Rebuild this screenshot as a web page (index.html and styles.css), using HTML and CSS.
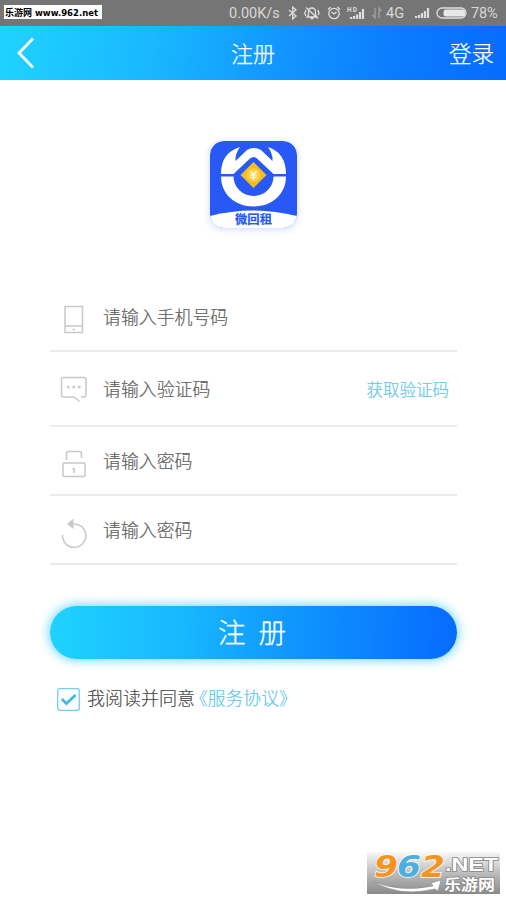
FILE: index.html
```html
<!DOCTYPE html>
<html lang="zh-CN">
<head>
<meta charset="UTF-8">
<title>注册</title>
<link rel="stylesheet" href="styles.css">
</head>
<body>
<div class="status">
  <div class="site-tag"><svg width="98" height="14" viewBox="0 0 98 14"><text class="tag-cn" x="1" y="10.8" textLength="27" lengthAdjust="spacingAndGlyphs">乐游网</text><text class="tag-url" x="31" y="10.8" textLength="63" lengthAdjust="spacingAndGlyphs">www.962.net</text></svg></div>
  <div class="status-right">
    <span class="speed">0.00K/s</span>
    <svg class="bt" width="10" height="14" viewBox="0 0 10 14"><path d="M1 4l7 6-3.300 3V1L8 4l-7 6"/></svg>
    <svg class="bell" width="16" height="14" viewBox="0 0 16 14"><path d="M3 11h10l-1.500-2V5.500C11.500 3.500 10 2 8 2S4.500 3.500 4.500 5.500V9zM6.500 12.500h3M2 1.500l12 11M2 4L.8 7l1 3M14 4l1 3-.8 2"/></svg>
    <svg class="alarm" width="14" height="14" viewBox="0 0 14 14"><circle cx="7" cy="7.500" r="5.200"/><path d="M4.500 6l2.500 2 2.500-2M1 3.500L3.500 1M13 3.500L10.500 1"/></svg>
    <svg class="hd" width="19" height="14" viewBox="0 0 19 14"><text x="0" y="6" textLength="10">HD</text><path d="M4 13v-2M7 13v-3M10 13V8.500M13 13V6M16 13V3"/></svg>
    <svg class="arrows" width="10" height="12" viewBox="0 0 10 12"><path d="M3 1v10L.5 8M7 11V1l2.500 3"/></svg>
    <span class="net">4G</span>
    <svg class="bars" width="17" height="12" viewBox="0 0 17 12"><path d="M2 11V9M5 11V8M8 11V6M11 11V4M14 11V1"/></svg>
    <svg class="battery" width="31" height="12" viewBox="0 0 31 12"><rect class="shell" x="1" y="1" width="29" height="10" rx="5"/><rect class="charge" x="7.500" y="2.500" width="21.500" height="7" rx="2.500"/></svg>
    <span class="pct">78%</span>
  </div>
</div>
<header class="nav">
  <svg class="back" width="20" height="32" viewBox="0 0 20 32"><path d="M17 1.500L3 16l14 14.500"/></svg>
  <h1>注册</h1>
  <a class="login">登录</a>
</header>
<main>
  <svg class="logo" width="87" height="87" viewBox="0 0 87 87">
    <defs><clipPath id="tile"><rect width="87" height="87" rx="14"/></clipPath></defs>
    <g clip-path="url(#tile)">
      <rect width="87" height="87" fill="#2859f7"/>
      <path d="M0 75Q43 64 87 75V87H0z" fill="#fff"/>
      <path d="M11 33C11 19 17 10 30 6Q25 13 25.500 20L37 9Q44 5 51 9L62.500 20Q63 13 58 6C70 10 76 19 76 33H63.500L47 17.500Q43.500 14.500 40 17.500L23.500 33z" fill="#fff"/>
      <path d="M11 35.500H23.500A20 19.500 0 0 0 63.500 35.500H76C76 53 62 65.500 43.500 65.500S11 53 11 35.500z" fill="#fff"/>
      <path d="M43.500 21L56.500 34 43.500 47 30.500 34z" fill="#f5bd20"/>
      <circle cx="43.500" cy="34" r="6.800" fill="#ffcf45"/>
      <path d="M40.500 30l3 3.700 3-3.700M43.500 33.700v5M40.300 34h6.400M40.300 36.300h6.400" fill="none" stroke="#fff" stroke-width="1.200"/>
      <text class="logo-name" x="25" y="82.500" textLength="37" lengthAdjust="spacingAndGlyphs">微回租</text>
    </g>
  </svg>
  <form class="form">
    <div class="row phone">
      <svg class="icon" width="30" height="32" viewBox="0 0 30 32"><path d="M6 2.500h17.500v26H6zM6 22h17.500M13.500 25.500h2.500"/></svg>
      <span>请输入手机号码</span>
    </div>
    <div class="row code">
      <svg class="icon" width="30" height="32" viewBox="0 0 30 32"><path d="M15 21H4.500Q2.500 21 2.500 19V3.500Q2.500 1.500 4.500 1.500H25Q27 1.500 27 3.500V19Q27 21 25 21H22M15 21l5.500 4.500"/><path class="dots" d="M8 11h2.500M13.500 11H16M19 11h2.500"/></svg>
      <span>请输入验证码</span>
      <a class="get-code">获取验证码</a>
    </div>
    <div class="row pass">
      <svg class="icon" width="30" height="32" viewBox="0 0 30 32"><rect x="4" y="15" width="22" height="13.500" rx="1"/><path d="M7.500 12V6Q7.500 3.500 9.500 3.500H20.500Q22.500 3.500 22.500 6V10M15 20.500v4.500M13.500 21h2.500"/></svg>
      <span>请输入密码</span>
    </div>
    <div class="row again">
      <svg class="icon" width="30" height="32" viewBox="0 0 30 32"><path d="M3.500 18A11.700 11.700 0 1 0 14 7"/><path class="head" d="M8 7L14.500 1.500v10.500z"/></svg>
      <span>请输入密码</span>
    </div>
    <button class="submit" type="button">注 册</button>
    <div class="agree">
      <svg width="23" height="23" viewBox="0 0 23 23"><rect x=".7" y=".7" width="21.600" height="21.600" rx="2"/><path d="M4.800 11l4.700 4.500 9-8.500"/></svg>
      <span>我阅读并同意</span><a>《服务协议》</a>
    </div>
  </form>
</main>
<svg class="watermark" width="133" height="42" viewBox="0 0 133 42">
  <defs>
    <linearGradient id="shade" x2="0" y2="1"><stop offset="0" stop-color="#f8f8f8"/><stop offset=".5" stop-color="#bdbdbd"/><stop offset="1" stop-color="#8a8a8a"/></linearGradient>
  </defs>
  <rect width="133" height="42" fill="url(#shade)"/>
  <path d="M6 29Q32 41 66 34L64 31 74 28 71 39 68 37Q32 46 6 29z" fill="#fff" stroke="#888" stroke-width=".6"/>
  <g class="digits"><text class="orange" x="7" y="25" textLength="24" lengthAdjust="spacingAndGlyphs">9</text><text class="blue" x="30" y="25" textLength="24" lengthAdjust="spacingAndGlyphs">6</text><text class="orange" x="54" y="25" textLength="24" lengthAdjust="spacingAndGlyphs">2</text></g>
  <text class="net-word" x="78" y="19" textLength="53" lengthAdjust="spacingAndGlyphs">.NET</text>
  <text class="site-word" x="77" y="37.500" textLength="51" lengthAdjust="spacingAndGlyphs">乐游网</text>
</svg>
</body>
</html>
```
FILE: styles.css
```css
* { box-sizing: border-box; }
body {
  margin: 0;
  height: 900px;
  overflow: hidden;
  background: #fff;
  position: relative;
  font-family: "Noto Sans CJK SC", sans-serif;
  font-weight: 300;
}
svg { display: block; flex: none; }
.status {
  height: 26px;
  background: #757575;
  display: flex;
  justify-content: space-between;
  align-items: flex-start;
  padding: 5px 7px 0 4px;
}
.site-tag { width: 98px; height: 14px; background: #fff; }
.site-tag svg { overflow: visible; }
.tag-cn { font: 700 9.5px "Noto Sans CJK SC", sans-serif; }
.tag-url { font: 700 9.5px "DejaVu Sans", sans-serif; }
.status-right {
  display: flex;
  align-items: center;
  height: 16px;
  font: 400 14.5px/16px Roboto, sans-serif;
  color: #d8d8d8;
}
.status-right span { position: relative; top: 1px; }
.status-right svg { fill: none; stroke: #dedede; stroke-width: 1.3; }
.speed { width: 52px; }
.bt { margin-left: 7px; }
.bell { margin-left: 6px; }
.alarm { margin-left: 7px; }
.hd { margin-left: 6px; }
.status-right .hd, .status-right .bars { stroke-width: 2.200; }
.status-right .hd text { font: 700 6.5px Roboto, sans-serif; fill: #dedede; stroke: none; }
.status-right .arrows { margin-left: 6px; stroke: #a2a2a2; }
.net { margin-left: 4px; width: 21px; }
.bars { margin-left: 7px; }
.battery { margin-left: 5px; }
.status-right .charge { fill: #e8e8e8; stroke: none; }
.pct { margin-left: 4px; width: 28px; letter-spacing: -.2px; }
.nav {
  height: 54px;
  background: linear-gradient(100deg, #1fd3ff 0%, #19b8ff 30%, #1296ff 55%, #0a7cff 78%, #066bff 100%);
  display: grid;
  grid-template-columns: 1fr auto 1fr;
  align-items: center;
  padding: 0 12px 0 16px;
  color: #fff;
  -webkit-text-stroke: .25px #fff;
}
.back { fill: none; stroke: #fff; stroke-width: 2.8; }
.nav h1 { margin: 0 0 0 -4px; font-size: 22px; font-weight: 300; line-height: 52px; position: relative; top: -1px; }
.login { justify-self: end; font-size: 22.5px; line-height: 52px; position: relative; top: -1px; }
.logo {
  margin: 61px auto 0;
  border-radius: 14px;
  box-shadow: 0 1px 7px rgba(60, 100, 250, .25);
}
.logo-name { font: 700 12px "Noto Sans CJK SC", sans-serif; fill: #2859f7; stroke: #2859f7; stroke-width: .2; }
.form { width: 407px; margin: 56px auto 0 50px; }
.row {
  display: flex;
  align-items: center;
  border-bottom: 2px solid #ebebeb;
  padding-left: 9px;
  font-size: 17.9px;
  color: #606060;
  -webkit-text-stroke: .2px currentColor;
}
.row span { margin-left: 14px; position: relative; top: -1px; }
.icon { fill: none; stroke: #c8c8c8; stroke-width: 1.5; position: relative; top: 3px; }
.icon .dots { stroke-width: 2.5; }
.icon .head { fill: #c8c8c8; stroke: none; }
.phone { height: 68px; padding-bottom: 1px; }
.code { height: 75px; padding-top: 1px; }
.pass { height: 69px; padding-top: 1px; }
.again { height: 69px; }
.get-code { margin-left: auto; margin-right: 8px; font-size: 16.5px; color: #60c5ec; }
.submit {
  display: block;
  width: 407px;
  height: 53px;
  margin-top: 41px;
  padding: 0 3px 4px 0;
  border: 0;
  border-radius: 27px;
  background: linear-gradient(92deg, #1fd3ff 0%, #18b8ff 32%, #0f93ff 62%, #066bff 100%);
  box-shadow: 0 0 11px 1px #66d5ff;
  color: #fff;
  font: 300 27.500px "Noto Sans CJK SC", sans-serif;
  word-spacing: 7px;
  -webkit-text-stroke: .3px #fff;
}
.agree { display: flex; align-items: center; height: 28px; margin: 26px 0 0 7px; font-size: 18px; color: #484848; -webkit-text-stroke: .15px currentColor; }
.agree svg { fill: none; stroke: #72cef2; stroke-width: 1.3; }
.agree svg path { stroke: #45b8e8; stroke-width: 3; }
.agree span { margin-left: 7px; position: relative; top: -2px; }
.agree a { margin-left: -5px; font-size: 17.8px; color: #60c5ec; position: relative; top: -2px; }
.watermark { position: absolute; left: 367px; top: 852px; overflow: visible; }
.digits text { font: italic 700 31px "DejaVu Sans", sans-serif; stroke: #fff; stroke-width: 1.5; paint-order: stroke; }
.digits .orange { fill: #f5941f; }
.digits .blue { fill: #4eaee0; }
.net-word, .site-word { fill: #fff; stroke: #888; stroke-width: 1.5; paint-order: stroke; }
.net-word { font: 700 18px "Liberation Sans", sans-serif; }
.site-word { font: 700 15px "Noto Sans CJK SC", sans-serif; }
```
